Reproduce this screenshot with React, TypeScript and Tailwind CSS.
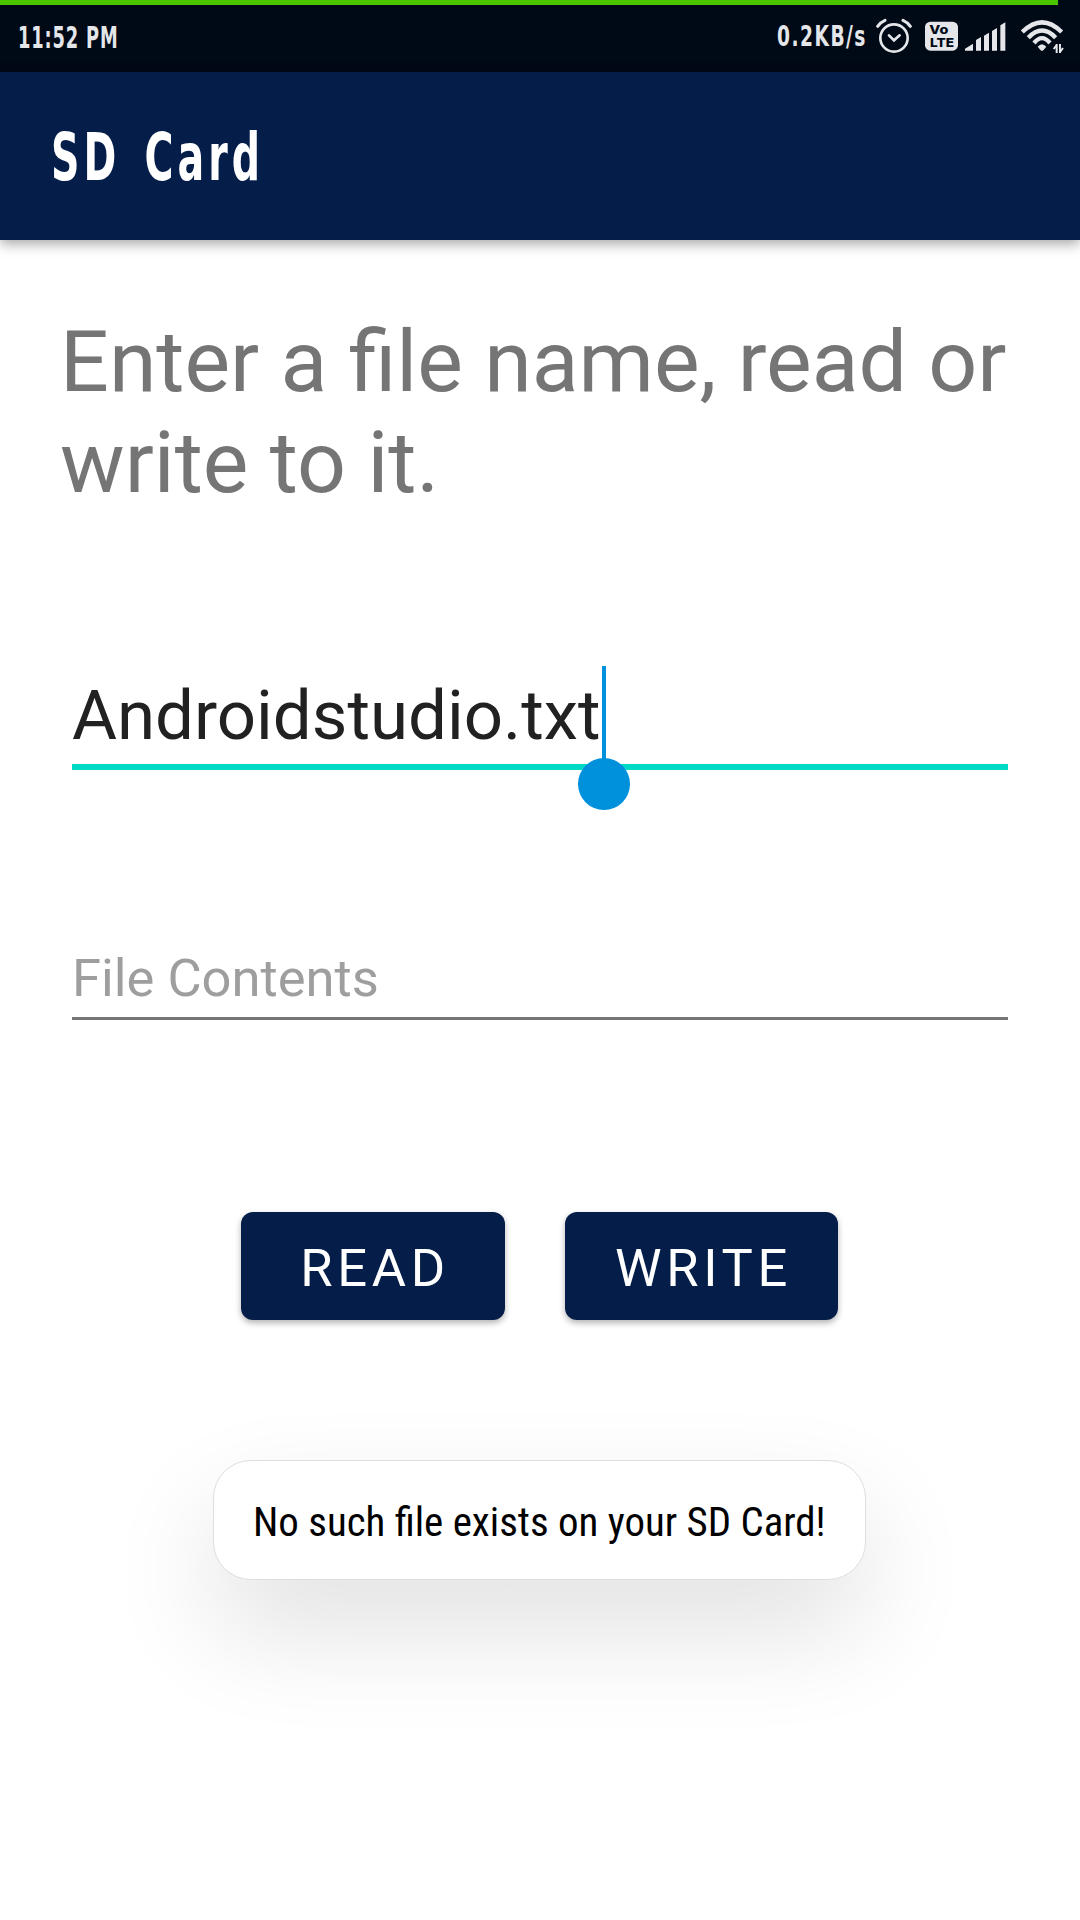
import React from "react";

const deco = "font-['DejaVu_Sans_Condensed','DejaVu_Sans',sans-serif] whitespace-pre origin-left";

function AlarmIcon() {
  return (
    <svg className="h-[36px] w-[36px] shrink-0" viewBox="0 0 108 108" fill="none" stroke="#e4e6e9" strokeLinecap="round">
      <circle cx="54" cy="60" r="41" strokeWidth="8" />
      <path d="M39 52l15 15 17-15" strokeWidth="8" />
      <path d="M5 25Q13 13 27 7M81 7Q95 13 103 25" strokeWidth="9" />
    </svg>
  );
}

function VolteIcon() {
  return (
    <svg className="h-[30px] w-[33px] shrink-0" viewBox="0 0 99 88" fontFamily="Inter, sans-serif" fontWeight="800">
      <rect y="1" width="99" height="87" rx="16" fill="#e4e6e9" />
      <text x="13" y="38" fontSize="37" textLength="57" lengthAdjust="spacingAndGlyphs" fill="#000916">Vo</text>
      <text x="15" y="77" fontSize="37" textLength="72" lengthAdjust="spacingAndGlyphs" fill="#000916">LTE</text>
    </svg>
  );
}

function SignalIcon() {
  return (
    <svg className="h-[29px] w-[41px] shrink-0" viewBox="0 0 123 87" fill="#e4e6e9">
      <path d="M0 86v-6l24-15v21zM33 86V54l15-9v41zM57 86V41l15-9v54zM81 86V27l15-9v68zM106 86V10l15-9v85z" />
    </svg>
  );
}

function WifiIcon() {
  return (
    <svg className="mt-[2px] h-[34px] w-[43px] shrink-0" viewBox="0 0 129 102" fill="none" stroke="#e4e6e9" strokeWidth="13">
      <path d="M4 36Q63-22 122 36" />
      <path d="M22 53Q63 10 104 53" />
      <path d="M39 69Q63 40 87 69" />
      <path d="M50 80Q63 65 76 80L67 91Q63 94 59 91z" fill="#e4e6e9" stroke="none" />
      <path d="M107 72v27M107 75l-9 12M117 72v27M117 96l9-12" strokeWidth="6" />
    </svg>
  );
}

function StatusBar() {
  return (
    <div className="h-[72px] bg-[#000916]">
      <div className="h-[5px] w-[1058px] bg-[#4ac500]" />
      <div className="flex h-[62px] items-center text-[#e4e6e9]">
        <div className="ml-[18px] w-[200px] pt-[2px]">
          <span className={`${deco} inline-block scale-x-[0.66] text-[30px] font-bold tracking-[1.3px]`}>11:52 PM</span>
        </div>
        <div className="ml-auto w-[99px] pt-[2px]">
          <span className={`${deco} inline-block scale-x-[0.74] text-[28px] font-bold tracking-[2px]`}>0.2KB/s</span>
        </div>
        <div className="mr-[13px]"><AlarmIcon /></div>
        <div className="mr-[7px]"><VolteIcon /></div>
        <div className="mr-[15px]"><SignalIcon /></div>
        <div className="mr-[16px]"><WifiIcon /></div>
      </div>
    </div>
  );
}

export default function App() {
  return (
    <div className="flex h-[1920px] w-[1080px] flex-col overflow-hidden bg-white font-['Roboto',sans-serif]">
      <StatusBar />
      <header className="flex h-[168px] shrink-0 items-center bg-[#051e49] pt-[4px] pl-[51px] text-white shadow-[0_4px_12px_rgba(0,0,0,0.35)]">
        <h1 className={`${deco} scale-x-[0.665] text-[66px] font-bold leading-none tracking-[6px] [word-spacing:10px]`}>SD Card</h1>
      </header>
      <main className="flex flex-col">
        <p className="mt-[71px] ml-[60px] h-[202px] w-[980px] text-[86px] leading-[101px] text-[#757575]">
          Enter a file name, read or
          <br />
          write to it.
        </p>
        <div className="relative mx-[72px] mt-[151px] h-[106px] border-b-[6px] border-[#03dac5] text-[69px] leading-[104px] text-[#212121]">
          <span>Androidstudio.txt</span>
          <div className="absolute top-[2px] left-[530px] h-[96px] w-[4px] bg-[#0091dc]" />
          <div className="absolute top-[94px] left-[506px] size-[52px] rounded-full bg-[#0091dc]" />
        </div>
        <div className="mx-[72px] mt-[170px] h-[80px] border-b-[3px] border-[#757575] text-[52.5px] leading-[76px] text-[#9e9e9e]">
          File Contents
        </div>
        <div className="mt-[192px] ml-[241px] flex gap-[60px] text-[52.5px] tracking-[4.7px] text-white">
          <button className="h-[108px] w-[264px] rounded-[12px] bg-[#051e49] pt-[5px] pl-[4px] shadow-[0_3px_6px_rgba(0,0,0,0.3)]">READ</button>
          <button className="h-[108px] w-[273px] rounded-[12px] bg-[#051e49] pt-[5px] pl-[4px] shadow-[0_3px_6px_rgba(0,0,0,0.3)]">WRITE</button>
        </div>
        <div className="mt-[140px] ml-[213px] flex h-[120px] w-[653px] items-center rounded-[38px] border border-[#dedede] bg-white pt-[6px] pl-[39px] text-black shadow-[0_50px_110px_rgba(0,0,0,0.12)]">
          <span className="whitespace-nowrap text-[40.9px] [font-stretch:condensed] [font-family:'Roboto_Condensed','Roboto',sans-serif]">
            No such file exists on your SD Card!
          </span>
        </div>
      </main>
    </div>
  );
}
